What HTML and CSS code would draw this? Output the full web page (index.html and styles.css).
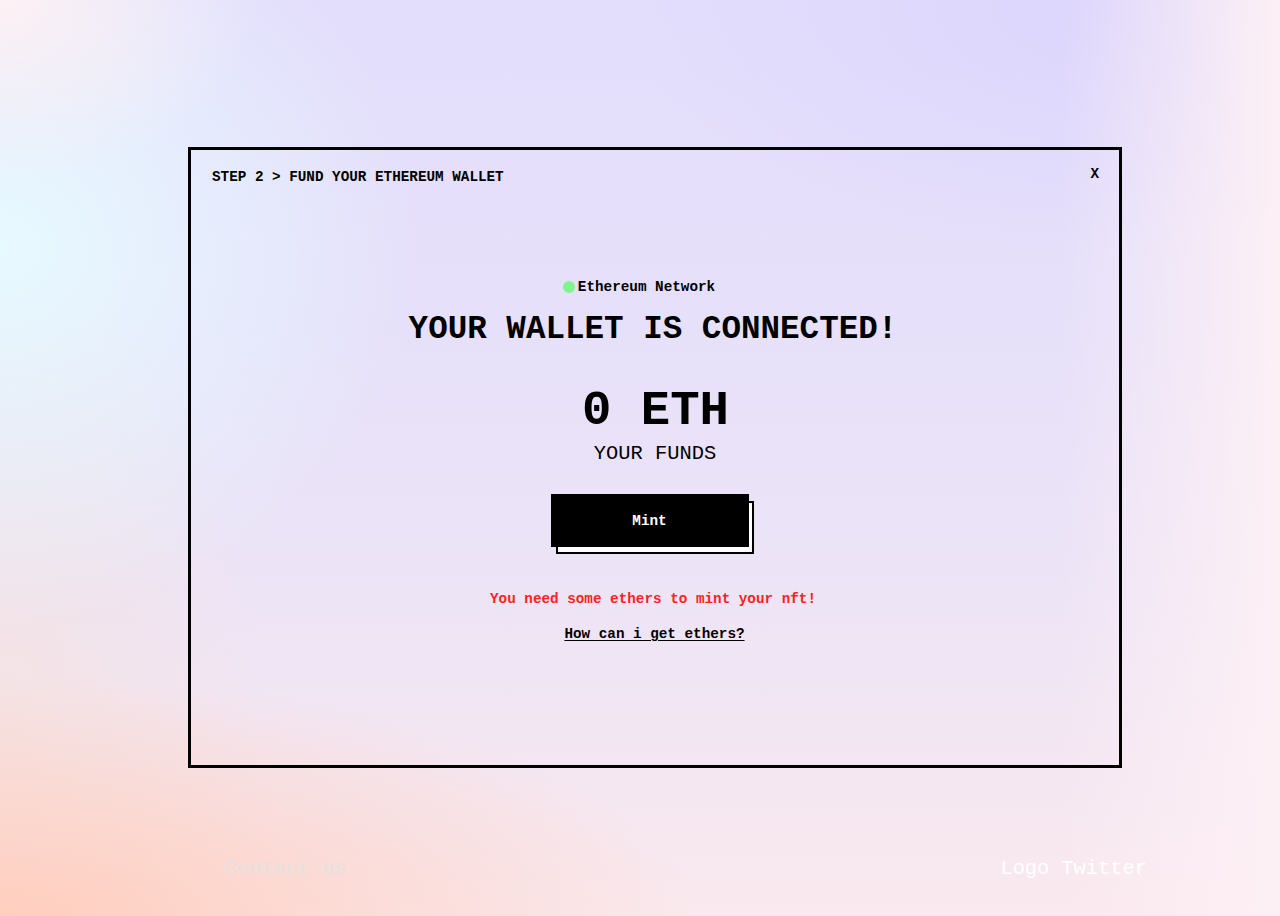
FILE: index.html
```html
<!DOCTYPE html>
<html lang="en">
<head>
<meta charset="utf-8">
<title>Fund your Ethereum wallet</title>
<link rel="stylesheet" href="styles.css">
</head>
<body>
<div class="page">
  <main class="main">
    <section class="modal">
      <header class="modal-head">
        <h2 class="step">STEP 2 &gt; FUND YOUR ETHEREUM WALLET</h2>
        <button class="close" type="button">X</button>
      </header>
      <div class="modal-body">
        <div class="network"><span class="dot"></span><span>Ethereum Network</span></div>
        <h1 class="title">YOUR WALLET IS CONNECTED!</h1>
        <div class="amount">0 ETH</div>
        <div class="funds">YOUR FUNDS</div>
        <div class="btn-wrap">
          <span class="btn-shadow"></span>
          <button class="mint" type="button">Mint</button>
        </div>
        <p class="warning">You need some ethers to mint your nft!</p>
        <a class="help" href="#">How can i get ethers?</a>
      </div>
    </section>
  </main>
  <footer class="footer">
    <a class="contact" href="#">Contact us</a>
    <div class="links"><a href="#">Logo</a><a href="#">Twitter</a></div>
  </footer>
</div>
</body>
</html>
```

FILE: styles.css
```css
* { box-sizing: border-box; }
html, body { margin: 0; padding: 0; }
body {
  font-family: "Liberation Mono", "DejaVu Sans Mono", monospace;
  color: #000;
  min-height: 916px;
  background:
    radial-gradient(ellipse 260px 180px at 0 0, rgba(253,241,244,1), rgba(253,241,244,0)),
    radial-gradient(ellipse 420px 380px at 0 27%, rgba(231,250,255,1), rgba(231,250,255,0)),
    radial-gradient(ellipse 700px 240px at 0 100%, rgba(255,206,190,1), rgba(255,206,190,0)),
    radial-gradient(ellipse 260px 520px at 0 80%, rgba(246,226,222,0.7), rgba(246,226,222,0)),
    linear-gradient(to left, rgba(253,240,245,1) 0, rgba(253,240,245,0.7) 60px, rgba(253,240,245,0) 220px),
    radial-gradient(ellipse 500px 260px at 88% 0, rgba(220,213,253,1), rgba(220,213,253,0)),
    linear-gradient(180deg, #e3defc 0%, #e6e0fa 35%, #ede4f6 65%, #fae9ee 100%);
}
.page {
  min-height: 916px;
  display: flex;
  flex-direction: column;
}
.main {
  padding: 147px 0 0 188px;
}
.modal {
  width: 934px;
  height: 621px;
  border: 3px solid #000;
  padding: 17px 20px 0 21px;
  display: flex;
  flex-direction: column;
}
.modal-head {
  display: flex;
  justify-content: space-between;
  align-items: flex-start;
}
.step {
  margin: 0;
  font-size: 14.3px;
  line-height: 20px;
  font-weight: 700;
}
.close {
  border: 0;
  background: none;
  padding: 0;
  margin-top: -3px;
  font-family: inherit;
  font-size: 14.3px;
  line-height: 20px;
  font-weight: 700;
  color: #000;
}
.modal-body {
  display: flex;
  flex-direction: column;
  align-items: center;
  margin-top: 90px;
  padding-right: 5px;
}
.network {
  display: flex;
  align-items: center;
  gap: 3px;
  font-size: 14.3px;
  line-height: 20px;
  font-weight: 700;
  margin-left: -28px;
}
.dot {
  width: 12px;
  height: 12px;
  border-radius: 50%;
  background: #7ef58d;
}
.title {
  margin: 13px 0 0;
  font-size: 32.6px;
  line-height: 40px;
  font-weight: 700;
}
.amount {
  margin-top: 33px;
  margin-left: 5px;
  font-size: 49px;
  line-height: 56px;
  font-weight: 700;
}
.funds {
  margin-top: 3px;
  margin-left: 4px;
  font-size: 20.4px;
  line-height: 24px;
}
.btn-wrap {
  position: relative;
  margin-top: 28px;
  width: 198px;
  height: 53px;
  margin-left: -7px;
}
.btn-shadow {
  position: absolute;
  left: 5px;
  top: 7px;
  width: 198px;
  height: 53px;
  background: #fff;
  border: 2px solid #000;
}
.mint {
  position: relative;
  width: 198px;
  height: 53px;
  border: 0;
  background: #000;
  color: #fff;
  font-family: inherit;
  font-size: 14.3px;
  font-weight: 700;
}
.warning {
  margin: 42px 0 0;
  color: #ff2222;
  font-size: 14.3px;
  line-height: 20px;
  font-weight: 700;
}
.help {
  margin-top: 15px;
  margin-left: 3px;
  color: #000;
  font-size: 14.3px;
  line-height: 20px;
  font-weight: 700;
  text-decoration: underline;
  text-underline-offset: 2px;
}
.footer {
  margin-top: 86px;
  display: flex;
  justify-content: space-between;
  padding: 0 133px 0 224px;
  font-size: 20.4px;
  line-height: 30px;
}
.footer a { text-decoration: none; }
.contact { color: #e4e2e0; }
.links { display: flex; gap: 12px; }
.links a { color: #fff; }
```
